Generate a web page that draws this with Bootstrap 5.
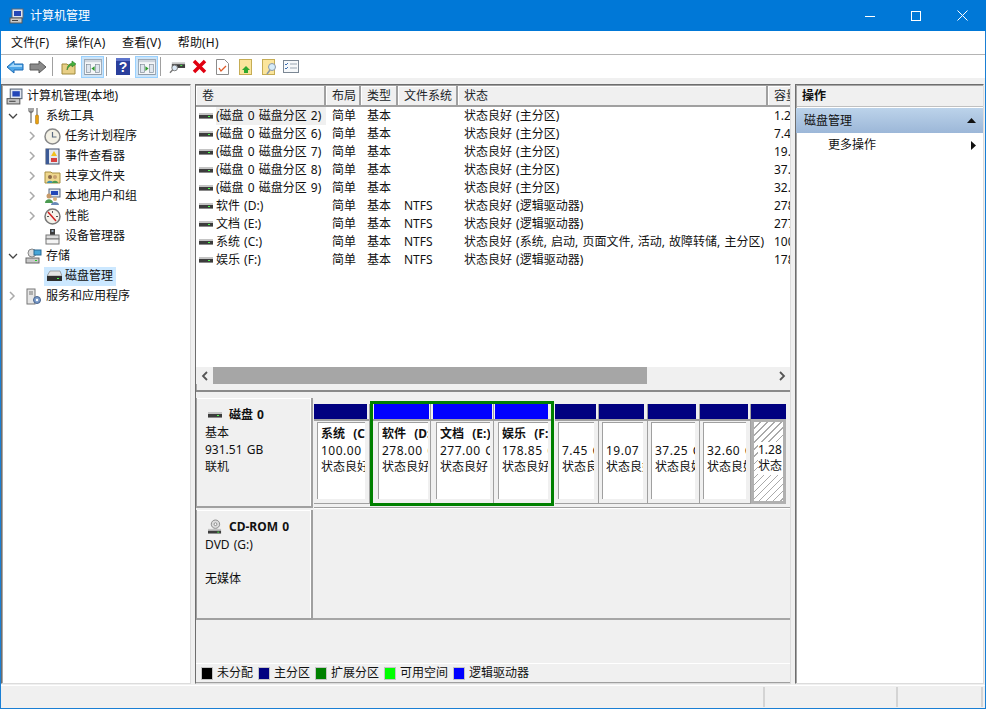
<!DOCTYPE html>
<html lang="zh-CN"><head><meta charset="utf-8"><title>计算机管理</title>
<link href="https://cdn.jsdelivr.net/npm/bootstrap@5.3.0/dist/css/bootstrap.min.css" rel="stylesheet">
<style>
html,body{margin:0;height:709px;overflow:hidden;background:#f0f0f0}
body{font:12px/18px "Noto Sans","Noto Sans CJK SC",sans-serif;color:#111;word-spacing:1px}
svg{display:block;flex:none}
.defs{position:absolute}
.ml1{margin-left:1px}.ml2{margin-left:2px}.ml3{margin-left:3px}.ml4{margin-left:4px}.ml5{margin-left:5px}.ml6{margin-left:6px}.ml8{margin-left:8px}.ml9{margin-left:9px}.ml10{margin-left:10px}
.mw{width:986px;height:709px;border:solid #1a7fd4;border-width:0 1px 1px 1px}
.ttl{height:31px;margin:0 -1px;background:#0078d7;color:#fff;padding:0 1px 0 9px}
.ttl span{margin-left:5px}
.ctl{width:46px;height:31px}
.mnu{height:24px;background:#fff;border-bottom:1px solid #b4b4b4;padding-left:1px}
.mnu span{padding:0 8px 0 9px;margin-right:-.4px;letter-spacing:.15px}
.tbr{height:23px;background:#fff;padding-left:5px}
.sp{width:1px;height:19px;background:#a0a0a0}
.tb{width:23px;height:22px;background:#cce4f8;border:1px solid #99d1ff}
.pnes{height:600px;margin-top:6px}
.pn{border:solid;border-width:1px;border-color:#6e6e6e #dcdcdc #dcdcdc #6e6e6e;background:#fff;box-shadow:inset 1px 1px 0 #a6a6a6}
.pl{width:190px}.pc{width:596px;margin:0 4px;background:#f0f0f0}.pr{width:189px}
.spc{height:1px}
.tr{height:20px;white-space:nowrap;padding-left:2px}
.tr.l2{padding-left:22px}
.tr.l0{padding-left:4px}
.chv{width:16px;height:16px}
.lab{margin-left:4px}
.lab3{margin-left:3px}
.sel{height:19px;background:#cce8ff;padding:0 3px;margin-left:4px}
.up{height:308px}
.lst{height:282px;overflow:hidden;background:#fff}
.vol{table-layout:fixed;width:640px;margin:0;--bs-table-bg:transparent;border-collapse:separate;border-spacing:0}
.vol th{height:22px;padding:0 0 0 6px;font-weight:400;background:#f0f0f0;border-right:2px solid #a0a0a0;border-bottom:2px solid #a0a0a0;border-top:1px solid #a0a0a0;box-shadow:inset 1px 1px 0 #fff;vertical-align:middle}
.vol td{height:18px;padding:0 0 0 6px;border:0;white-space:nowrap;vertical-align:middle;color:#111}
.vol td.nm{padding:0 0 0 3px}
.c1{width:130px}.c2{width:35px}.c3{width:37px}.c4{width:60px}.c5{width:310px}.c6{width:68px}
.hl{background:#f0f0f0}
.nmw{display:flex;align-items:center;gap:3px}
.sbar{height:17px;background:#f0f0f0}
.sbtn{display:block;width:17px;height:17px}
.thm{width:434px;height:17px;background:#a6a6a6}
.spl{height:3px;background:#f0f0f0;border-top:2px solid #8a8a8a;margin-top:6px}
.low{background:#f0f0f0;height:290px;position:relative}
.drow{height:115px;padding-top:5px}
.info{width:117px;height:110px;background:#f0f0f0;border:solid #a0a0a0;border-width:0 2px 2px 1px;box-shadow:inset 0 1px 0 #fff,inset -1px 0 0 #fff;padding:8px 0 0 8px;line-height:17.25px;flex:none}
.info b{font-weight:700}
.dh{display:flex;align-items:center;gap:7px;margin-left:3px;height:17.5px}
.strip{height:107px;margin-top:3px;margin-left:1px;flex:1;border-bottom:1px solid #a0a0a0;box-shadow:0 1px 0 #fff}
.prt{flex:none;height:100px;margin-top:3px;border-bottom:1px solid #a0a0a0;border-right:1px solid #a0a0a0}
.bar{height:15px;background:#000080;margin-right:2px}
.bar.lg{background:#00f}
.bdy{height:84px;padding:1px 4px 4px 3px;border-top:2px solid #a0a0a0;background:#f0f0f0}
.inn{height:77px;background:#fff;border:solid #a0a0a0;border-width:1px 0 0 1px;padding:3px 0 0 3px;overflow:hidden;white-space:nowrap;line-height:16.5px}
.inn b{display:block;font-weight:700}
.inn div,.inn b{overflow:hidden}
.inn .sz{letter-spacing:.5px}
.ext{flex:none;display:flex;height:105px;border:3px solid #008000}
.ext .prt{margin-top:0;height:99px;border-bottom:0}
.p1{width:56px}.p2{width:58px}.p3{width:63px}.p4{width:57px;border-right:0!important}
.p5{width:44px;margin-left:1px}.p6{width:49px}.p7{width:52px}.p8{width:51px}.p9{width:35px;border:0!important}
.p2 .bar{margin:0 1px 0 1px}.p2 .bdy{padding-left:5px;padding-right:2px}
.p3 .bar{margin:0 1px 0 2px}.p3 .bdy{padding-left:5px;padding-right:3px}
.p4 .bar{margin:0 3px 0 1px}.p4 .bdy{padding-left:4px;padding-right:3px}
.p6 .bar{margin-right:3px}
.p7 .bar{margin-right:3px}
.p9 .bar{margin-right:0}
.p9 .bdy{height:85px;border:3px solid #b0b0b0;padding:0}
.p9 .inn{height:79px;border:0;background:repeating-linear-gradient(135deg,#fff 0 4px,#aaa 4px 5px);padding:3px 0 0 4px}
.p9 .inn div{background:#fff}
.p9 .inn .ph{background:none;height:16.5px}
.crow{height:110px;margin-top:2px}
.cfill{flex:1;border-bottom:2px solid #a6a6a6;height:110px}
.lgd{position:absolute;left:0;right:0;bottom:0;height:20px;padding-left:5px;border-top:1px solid #fff;border-bottom:1px solid #a0a0a0;background:#f0f0f0}
.sw{width:12px;height:13px;border:1px solid #c4c4c4;margin-right:4px;flex:none}
.k0{background:#000}.k1{background:#000080}.k2{background:#008000}.k3{background:#0f0}.k4{background:#00f}
.lgd span{margin-right:5px}
.ah{height:21px;margin:1px 0 0 1px;font-weight:700;background:#f0f0f0;padding-left:5px;border-bottom:1px solid #c0c0c0}
.as{height:25px;margin-top:1px;background:linear-gradient(#bcd3ea,#9cb7d8);padding:0 7px 0 8px}
.ai{height:22px;margin-top:1px;padding:0 7px 0 32px}
.sts{height:23px;margin-top:1px;border-top:1px solid #fff;background:#f0f0f0}
.stc{border-right:2px solid #d4d4d4;height:20px;margin-top:1px}
.s1{width:764px}.s2{width:133px}.s3{width:85px}
</style></head><body>
<svg class="defs" width="0" height="0"><defs>
<symbol id="drv" viewBox="0 0 14 8"><rect y="1" width="14" height="2" fill="#c4c4c4"/><rect y="3" width="14" height="3" fill="#3c3c3c"/><rect y="6" width="14" height="1" fill="#8a8a8a"/><rect x="9" y="4" width="2" height="1" fill="#4dff4d"/></symbol>
<symbol id="pn" viewBox="0 0 22 20"><rect x=".5" y=".5" width="21" height="19" fill="#f4f6f8" stroke="#7b8794"/><rect x="1" y="1" width="20" height="3" fill="#cfd6de"/><rect x="3" y="7" width="5" height="10" fill="#dfe6ee" stroke="#7b8794" stroke-width=".8"/><rect x="14" y="7" width="5" height="10" fill="#dfe6ee" stroke="#7b8794" stroke-width=".8"/></symbol>
<symbol id="cr" viewBox="0 0 16 16"><path d="M6 4l4 4-4 4" fill="none" stroke="#aaa" stroke-width="1.500"/></symbol>
<symbol id="cd" viewBox="0 0 16 16"><path d="M5 6l4 4 4-4" fill="none" stroke="#444" stroke-width="1.300"/></symbol>
</defs></svg>
<div class="mw d-flex flex-column">
 <div class="ttl d-flex align-items-center">
  <svg width="16" height="16" viewBox="0 0 16 16"><rect x="3" y="1" width="11" height="9" fill="#dfe6f0" stroke="#58667a"/><rect x="5" y="3" width="7" height="5" fill="#2347b8"/><rect x="1" y="10" width="12" height="5" fill="#c8c8c8" stroke="#5a5a5a"/><rect x="3" y="12" width="6" height="1" fill="#444"/></svg>
  <span>计算机管理</span>
  <div class="ms-auto d-flex">
   <div class="ctl d-flex align-items-center justify-content-center"><svg width="10" height="10" viewBox="0 0 10 10"><path d="M0 5.500h10" stroke="#fff"/></svg></div>
   <div class="ctl d-flex align-items-center justify-content-center"><svg width="10" height="10" viewBox="0 0 10 10"><rect x=".5" y=".5" width="9" height="9" fill="none" stroke="#fff"/></svg></div>
   <div class="ctl d-flex align-items-center justify-content-center"><svg width="11" height="11" viewBox="0 0 11 11"><path d="M.5.5l10 10M10.500.5l-10 10" stroke="#fff"/></svg></div>
  </div>
 </div>
 <div class="mnu d-flex align-items-center"><span>文件(F)</span><span>操作(A)</span><span>查看(V)</span><span>帮助(H)</span></div>
 <div class="tbr d-flex align-items-center">
  <svg width="18" height="16" viewBox="0 0 18 16"><path d="M1 8l7-6v3h9v6H8v3z" fill="#4ea6e8" stroke="#1c6bb5"/><path d="M3 8l5-4v2h8v2H4z" fill="#a6d8fa"/></svg>
  <svg class="ml5" width="18" height="16" viewBox="0 0 18 16"><path d="M17 8l-7-6v3H1v6h9v3z" fill="#8a8a8a" stroke="#5a5a5a"/></svg>
  <div class="sp ml5"></div>
  <svg class="ml8" width="16" height="16" viewBox="0 0 16 16"><path d="M1 5h5l1 1h7v9H1z" fill="#e8cf86" stroke="#a08a3c"/><path d="M6 11c0-4 2-6 5-7V2l4 3-4 3V6c-2 .6-4 2-5 5z" fill="#46b23c" stroke="#2c7a2a" stroke-width=".6"/></svg>
  <div class="tb ml4 d-flex align-items-center justify-content-center"><svg width="18" height="16" viewBox="0 0 22 20"><use href="#pn"/><path d="M13 9v6l-4-3z" fill="#2c9a2c"/></svg></div>
  <div class="sp ml2"></div>
  <svg class="ml9" width="14" height="17" viewBox="0 0 14 17"><rect width="14" height="17" fill="#2a3f9c"/><rect width="14" height="3" fill="#5d74cc"/><text x="7" y="14" font-size="14" font-weight="700" fill="#fff" text-anchor="middle" font-family="Liberation Sans">?</text></svg>
  <div class="tb ml5 d-flex align-items-center justify-content-center"><svg width="18" height="16" viewBox="0 0 22 20"><use href="#pn"/><path d="M9 9v6l4-3z" fill="#2c9a2c"/></svg></div>
  <div class="sp ml2"></div>
  <svg class="ml8" width="17" height="14" viewBox="0 0 18 14"><rect x="3" y="2" width="14" height="2" fill="#c4c4c4"/><rect x="3" y="4" width="14" height="4" fill="#3c3c3c"/><rect x="12" y="5" width="2" height="1" fill="#4dff4d"/><circle cx="6" cy="8" r="3" fill="#dbe8f5" stroke="#777"/><path d="M4 10l-3 3" stroke="#777" stroke-width="1.500"/></svg>
  <svg class="ml6" width="15" height="15" viewBox="0 0 15 15"><path d="M2 2l11 11M13 2L2 13" stroke="#e00010" stroke-width="3.500"/></svg>
  <svg class="ml9" width="13" height="16" viewBox="0 0 13 16"><path d="M.5.5h8l4 4v11H.5z" fill="#fff" stroke="#8c8c8c"/><path d="M3 9l2 3 5-5" fill="none" stroke="#e05a28" stroke-width="1.300"/></svg>
  <svg class="ml10" width="13" height="16" viewBox="0 0 13 16"><rect x=".5" y=".5" width="12" height="15" fill="#fbe59c" stroke="#c6ad55"/><path d="M8 8l-4 4h2v3h4v-3h2z" transform="translate(-1 -1)" fill="#2fa82f"/></svg>
  <svg class="ml10" width="16" height="16" viewBox="0 0 16 16"><rect x=".5" y=".5" width="12" height="15" fill="#fbe59c" stroke="#c6ad55"/><circle cx="10" cy="8" r="3.500" fill="#d6ecfa" stroke="#8a98a8"/><path d="M8 11l-3 4" stroke="#8a98a8" stroke-width="1.500"/></svg>
  <svg class="ml5" width="16" height="13" viewBox="0 0 16 13"><rect x=".5" y=".5" width="15" height="12" fill="#f6f8fa" stroke="#7b8794"/><path d="M2 4l1 1 2-2M2 8l1 1 2-2" fill="none" stroke="#3f6fb0"/><path d="M7 4h7M7 8h7" stroke="#9aa6b2"/></svg>
 </div>
 <div class="pnes d-flex">
  <div class="pn pl">
   <div class="spc"></div>
   <div class="tr l0 d-flex align-items-center"><svg width="17" height="17" viewBox="0 0 16 16"><rect x="4" y="1" width="11" height="9" fill="#dfe6f0" stroke="#58667a"/><rect x="6" y="3" width="7" height="5" fill="#2347b8"/><rect x="1" y="10" width="12" height="5" fill="#c8c8c8" stroke="#5a5a5a"/><rect x="3" y="12" width="6" height="1" fill="#444"/></svg><span class="lab">计算机管理(本地)</span></div>
   <div class="tr d-flex align-items-center"><svg class="chv" viewBox="0 0 16 16"><use href="#cd"/></svg><svg class="ml6" width="16" height="18" viewBox="0 0 16 18"><path d="M5 1v4M3 1v3l2 2 2-2V1M5 6v10" fill="none" stroke="#777" stroke-width="1.300"/><rect x="10" y="1" width="2" height="7" fill="#aaa"/><rect x="9.500" y="8" width="3" height="9" rx="1" fill="#e8a010" stroke="#9a6a10" stroke-width=".5"/></svg><span class="lab">系统工具</span></div>
   <div class="tr l2 d-flex align-items-center"><svg class="chv" viewBox="0 0 16 16"><use href="#cr"/></svg><svg class="ml4" width="17" height="17" viewBox="0 0 17 17"><circle cx="8.500" cy="8.500" r="7.500" fill="#f3f0e4" stroke="#888" stroke-width="1.500"/><path d="M8.500 4v5h4" fill="none" stroke="#5a6a80" stroke-width="1.200"/></svg><span class="lab">任务计划程序</span></div>
   <div class="tr l2 d-flex align-items-center"><svg class="chv" viewBox="0 0 16 16"><use href="#cr"/></svg><svg class="ml4" width="17" height="17" viewBox="0 0 17 17"><rect x="2" y="1" width="13" height="15" fill="#e4e8f0" stroke="#3c4a66"/><rect x="2" y="1" width="3" height="15" fill="#3c5a96"/><path d="M10 3l3 5H7z" fill="#f0c020"/><rect x="7" y="10" width="6" height="4" fill="#d84040"/></svg><span class="lab">事件查看器</span></div>
   <div class="tr l2 d-flex align-items-center"><svg class="chv" viewBox="0 0 16 16"><use href="#cr"/></svg><svg class="ml4" width="17" height="17" viewBox="0 0 17 17"><path d="M1 4h6l1 1h8v10H1z" fill="#efd78e" stroke="#a88f40"/><circle cx="6" cy="9" r="2" fill="#8a6a4a"/><path d="M3 15c0-3 6-3 6 0z" fill="#3f8fb0"/><circle cx="11" cy="9" r="2" fill="#c8a070"/><path d="M8 15c0-3 6-3 6 0z" fill="#4a9a50"/></svg><span class="lab">共享文件夹</span></div>
   <div class="tr l2 d-flex align-items-center"><svg class="chv" viewBox="0 0 16 16"><use href="#cr"/></svg><svg class="ml4" width="17" height="17" viewBox="0 0 17 17"><rect x="5" y="1" width="11" height="8" fill="#dfe6f0" stroke="#58667a"/><rect x="7" y="3" width="7" height="4" fill="#2347b8"/><circle cx="5" cy="8" r="2.500" fill="#c89a6a"/><path d="M1 15c0-5 8-5 8 0z" fill="#4a9a50"/><circle cx="11" cy="11" r="2" fill="#d8b080"/><path d="M7 17c0-4 8-4 8 0z" fill="#6a8ab8"/></svg><span class="lab">本地用户和组</span></div>
   <div class="tr l2 d-flex align-items-center"><svg class="chv" viewBox="0 0 16 16"><use href="#cr"/></svg><svg class="ml4" width="17" height="17" viewBox="0 0 17 17"><circle cx="8.500" cy="8.500" r="7.500" fill="#f5f2ea" stroke="#777" stroke-width="1.500"/><path d="M4 4l8 9" stroke="#d02020" stroke-width="1.500"/><path d="M8.500 3v2M3 8.500h2M12 8.500h2" stroke="#555"/></svg><span class="lab">性能</span></div>
   <div class="tr l2 d-flex align-items-center"><span class="chv"></span><svg class="ml4" width="17" height="17" viewBox="0 0 17 17"><rect x="6" y="1" width="5" height="6" fill="#3c3c3c"/><rect x="7.500" y="2" width="2" height="2" fill="#9ab"/><rect x="2" y="7" width="13" height="4" fill="#dcdcdc" stroke="#777"/><rect x="2" y="11" width="13" height="5" fill="#f4f4f4" stroke="#777"/></svg><span class="lab">设备管理器</span></div>
   <div class="tr d-flex align-items-center"><svg class="chv" viewBox="0 0 16 16"><use href="#cd"/></svg><svg class="ml5" width="17" height="17" viewBox="0 0 17 17"><circle cx="7" cy="5" r="4" fill="#dcdcdc" stroke="#888"/><rect x="9" y="2" width="7" height="5" fill="#46a6d8" stroke="#2a6a96"/><rect x="1" y="10" width="13" height="5" fill="#c8c8c8" stroke="#666"/><rect x="10" y="12" width="2" height="1" fill="#2c2"/></svg><span class="lab">存储</span></div>
   <div class="tr l2 d-flex align-items-center"><span class="chv"></span><span class="d-flex align-items-center sel"><svg width="15" height="13" viewBox="0 0 15 13"><path d="M3 1h10l2 5H0z" fill="#e4e4e4" stroke="#777" stroke-width=".6"/><rect y="6" width="15" height="5" fill="#2e2e2e"/><rect x="10" y="8" width="2" height="1" fill="#4dff4d"/></svg><span class="lab3">磁盘管理</span></span></div>
   <div class="tr d-flex align-items-center"><svg class="chv" viewBox="0 0 16 16"><use href="#cr"/></svg><svg class="ml5" width="17" height="17" viewBox="0 0 17 17"><rect x="2" y="1" width="8" height="15" fill="#e6e6e6" stroke="#777"/><path d="M4 4h4M4 6h4" stroke="#777"/><circle cx="12" cy="12" r="3.500" fill="#7a9ac8" stroke="#48648e"/><circle cx="12" cy="12" r="1.200" fill="#fff"/></svg><span class="lab">服务和应用程序</span></div>
  </div>

  <div class="pn pc d-flex flex-column">
   <div class="up">
    <div class="lst">
     <table class="vol table table-borderless">
      <colgroup><col class="c1"><col class="c2"><col class="c3"><col class="c4"><col class="c5"><col class="c6"></colgroup>
      <thead><tr><th>卷</th><th>布局</th><th>类型</th><th>文件系统</th><th>状态</th><th>容量</th></tr></thead>
      <tbody>
      <tr><td class="nm"><div class="nmw"><svg width="14" height="8"><use href="#drv"/></svg><span class="hl flex-grow-1">(磁盘 0 磁盘分区 2)</span></div></td><td>简单</td><td>基本</td><td></td><td>状态良好 (主分区)</td><td>1.28 GB</td></tr>
      <tr><td class="nm"><div class="nmw"><svg width="14" height="8"><use href="#drv"/></svg><span>(磁盘 0 磁盘分区 6)</span></div></td><td>简单</td><td>基本</td><td></td><td>状态良好 (主分区)</td><td>7.45 GB</td></tr>
      <tr><td class="nm"><div class="nmw"><svg width="14" height="8"><use href="#drv"/></svg><span>(磁盘 0 磁盘分区 7)</span></div></td><td>简单</td><td>基本</td><td></td><td>状态良好 (主分区)</td><td>19.07 GB</td></tr>
      <tr><td class="nm"><div class="nmw"><svg width="14" height="8"><use href="#drv"/></svg><span>(磁盘 0 磁盘分区 8)</span></div></td><td>简单</td><td>基本</td><td></td><td>状态良好 (主分区)</td><td>37.25 GB</td></tr>
      <tr><td class="nm"><div class="nmw"><svg width="14" height="8"><use href="#drv"/></svg><span>(磁盘 0 磁盘分区 9)</span></div></td><td>简单</td><td>基本</td><td></td><td>状态良好 (主分区)</td><td>32.60 GB</td></tr>
      <tr><td class="nm"><div class="nmw"><svg width="14" height="8"><use href="#drv"/></svg><span>软件 (D:)</span></div></td><td>简单</td><td>基本</td><td>NTFS</td><td>状态良好 (逻辑驱动器)</td><td>278.00 GB</td></tr>
      <tr><td class="nm"><div class="nmw"><svg width="14" height="8"><use href="#drv"/></svg><span>文档 (E:)</span></div></td><td>简单</td><td>基本</td><td>NTFS</td><td>状态良好 (逻辑驱动器)</td><td>277.00 GB</td></tr>
      <tr><td class="nm"><div class="nmw"><svg width="14" height="8"><use href="#drv"/></svg><span>系统 (C:)</span></div></td><td>简单</td><td>基本</td><td>NTFS</td><td>状态良好 (系统, 启动, 页面文件, 活动, 故障转储, 主分区)</td><td>100.00 GB</td></tr>
      <tr><td class="nm"><div class="nmw"><svg width="14" height="8"><use href="#drv"/></svg><span>娱乐 (F:)</span></div></td><td>简单</td><td>基本</td><td>NTFS</td><td>状态良好 (逻辑驱动器)</td><td>178.85 GB</td></tr>
      </tbody>
     </table>
    </div>
    <div class="sbar d-flex">
     <span class="sbtn d-flex align-items-center justify-content-center"><svg width="8" height="10" viewBox="0 0 8 10"><path d="M6 1L2 5l4 4" fill="none" stroke="#555" stroke-width="1.800"/></svg></span>
     <div class="thm"></div>
     <span class="sbtn ms-auto d-flex align-items-center justify-content-center"><svg width="8" height="10" viewBox="0 0 8 10"><path d="M2 1l4 4-4 4" fill="none" stroke="#555" stroke-width="1.800"/></svg></span>
    </div>
    <div class="spl"></div>
   </div>
   <div class="low">
    <div class="drow d-flex">
     <div class="info"><div class="dh"><svg width="14" height="8"><use href="#drv"/></svg><b>磁盘 0</b></div><div>基本</div><div>931.51 GB</div><div>联机</div></div>
     <div class="strip d-flex">
      <div class="prt p1"><div class="bar"></div><div class="bdy"><div class="inn"><b>系统&nbsp; (C:)</b><div class="sz">100.00 GB</div><div>状态良好</div></div></div></div>
      <div class="ext">
       <div class="prt p2"><div class="bar lg"></div><div class="bdy"><div class="inn"><b>软件&nbsp; (D:)</b><div class="sz">278.00 GB</div><div>状态良好</div></div></div></div>
       <div class="prt p3"><div class="bar lg"></div><div class="bdy"><div class="inn"><b>文档&nbsp; (E:)</b><div class="sz">277.00 GB</div><div>状态良好</div></div></div></div>
       <div class="prt p4"><div class="bar lg"></div><div class="bdy"><div class="inn"><b>娱乐&nbsp; (F:)</b><div class="sz">178.85 GB</div><div>状态良好</div></div></div></div>
      </div>
      <div class="prt p5"><div class="bar"></div><div class="bdy"><div class="inn"><b>&nbsp;</b><div class="sz">7.45 GB</div><div>状态良好</div></div></div></div>
      <div class="prt p6"><div class="bar"></div><div class="bdy"><div class="inn"><b>&nbsp;</b><div class="sz">19.07 GB</div><div>状态良好</div></div></div></div>
      <div class="prt p7"><div class="bar"></div><div class="bdy"><div class="inn"><b>&nbsp;</b><div class="sz">37.25 GB</div><div>状态良好</div></div></div></div>
      <div class="prt p8"><div class="bar"></div><div class="bdy"><div class="inn"><b>&nbsp;</b><div class="sz">32.60 GB</div><div>状态良好</div></div></div></div>
      <div class="prt p9"><div class="bar"></div><div class="bdy"><div class="inn"><div class="ph"></div><div>1.28 GB</div><div>状态良好</div></div></div></div>
     </div>
    </div>
    <div class="crow d-flex">
     <div class="info"><div class="dh"><svg width="14" height="16" viewBox="0 0 15 16"><circle cx="8" cy="5" r="4.500" fill="#dcdcdc" stroke="#888"/><circle cx="8" cy="5" r="1.500" fill="#fff" stroke="#888"/><rect y="10" width="14" height="2" fill="#c4c4c4"/><rect y="12" width="14" height="3" fill="#3c3c3c"/><rect x="10" y="13" width="2" height="1" fill="#4dff4d"/></svg><b>CD-ROM 0</b></div><div>DVD (G:)</div><div>&nbsp;</div><div>无媒体</div></div>
     <div class="cfill"></div>
    </div>
    <div class="lgd d-flex align-items-center">
     <i class="sw k0"></i><span>未分配</span>
     <i class="sw k1"></i><span>主分区</span>
     <i class="sw k2"></i><span>扩展分区</span>
     <i class="sw k3"></i><span>可用空间</span>
     <i class="sw k4"></i><span>逻辑驱动器</span>
    </div>
   </div>
  </div>

  <div class="pn pr">
   <div class="ah d-flex align-items-center">操作</div>
   <div class="as d-flex align-items-center"><span>磁盘管理</span><svg class="ms-auto" width="9" height="5" viewBox="0 0 9 5"><path d="M4.500 0L9 5H0z" fill="#111"/></svg></div>
   <div class="ai d-flex align-items-center"><span>更多操作</span><svg class="ms-auto" width="5" height="9" viewBox="0 0 5 9"><path d="M0 0l5 4.500L0 9z" fill="#111"/></svg></div>
  </div>
 </div>
 <div class="sts d-flex">
  <div class="stc s1"></div><div class="stc s2"></div><div class="stc s3"></div>
 </div>
</div>
<script src="https://cdn.jsdelivr.net/npm/bootstrap@5.3.0/dist/js/bootstrap.bundle.min.js"></script>
</body></html>
